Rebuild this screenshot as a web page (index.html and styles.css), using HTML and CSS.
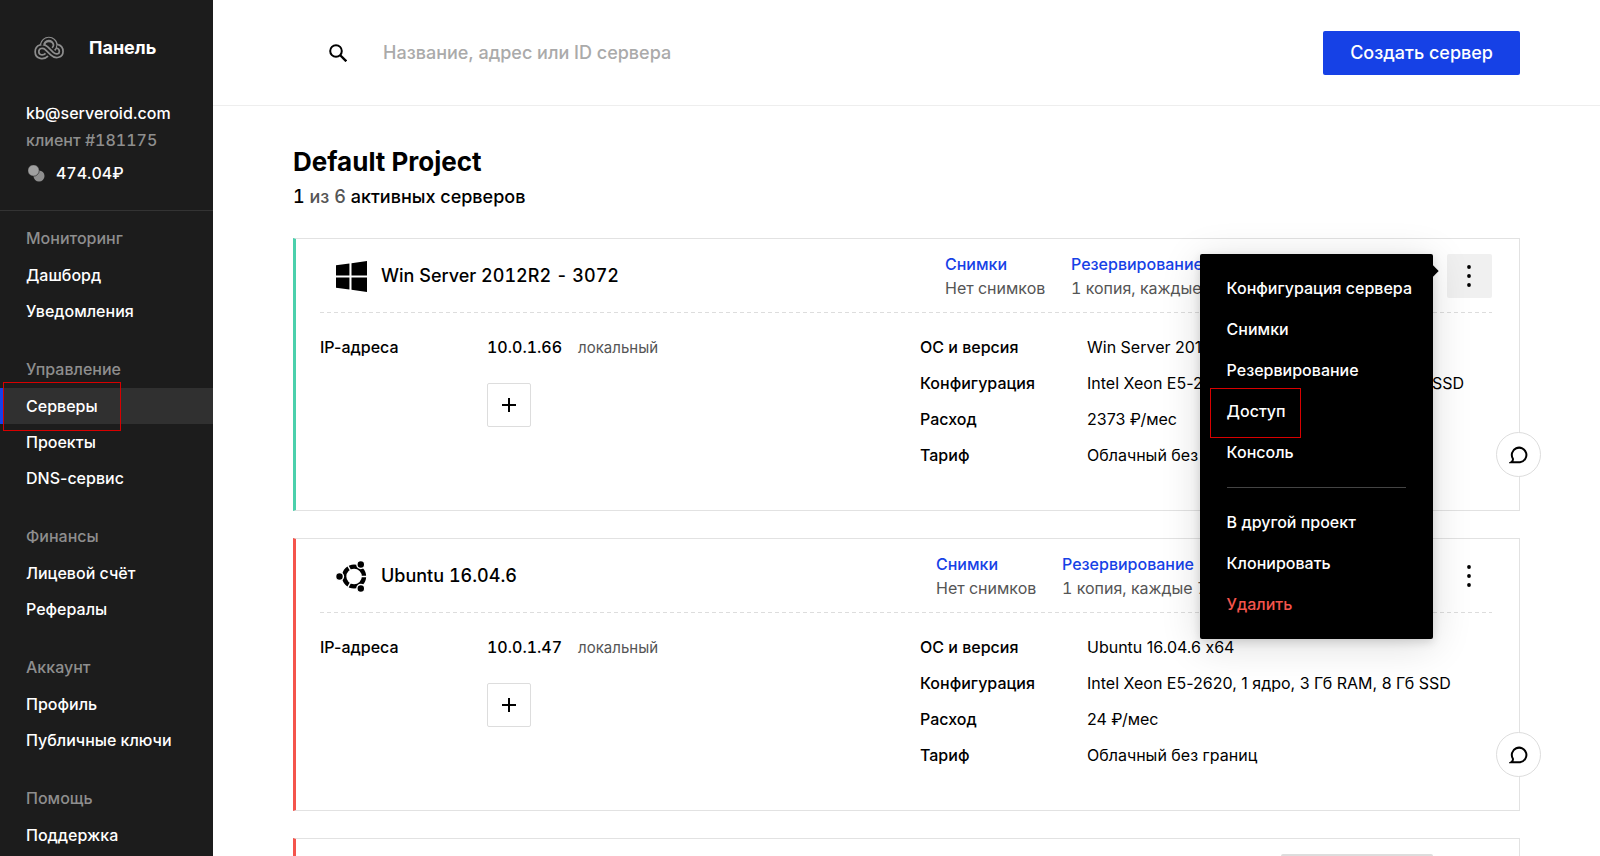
FILE: index.html
```html
<!DOCTYPE html>
<html lang="ru">
<head>
<meta charset="utf-8">
<title>Панель</title>
<link rel="stylesheet" href="styles.css">
</head>
<body>
<svg class="defs" width="0" height="0" aria-hidden="true">
  <symbol id="dots" viewBox="0 0 44 44"><circle cx="22" cy="13" r="1.900"/><circle cx="22" cy="22" r="1.900"/><circle cx="22" cy="31" r="1.900"/></symbol>
  <symbol id="plus" viewBox="0 0 14 14"><path d="M7 0v14M0 7h14" fill="none" stroke="#000" stroke-width="2"/></symbol>
  <symbol id="chat" viewBox="0 0 20 18"><path d="M2.200 16.200c1.300-.9 2-2 1.700-3.400A7.300 7.300 0 1 1 11 16.200z" fill="none" stroke="#000" stroke-width="2"/></symbol>
</svg>
<div class="app">
  <aside class="sidebar">
    <a class="brand" href="#">
      <svg class="logo" viewBox="0 0 30 24" fill="none" aria-hidden="true">
        <g stroke="#8e8e8e" stroke-width="5.400"><path d="M8.400 9A6.600 6.600 0 0 1 21.400 9c0 1.800-.8 3-2 4.200"/><path d="M12.800 18.800C9.500 22 3 21.300 3 15.700 3 10.500 9 9 12.500 12.200l5.500 5.400c4 3.800 9.200 2 9.200-2.200 0-2.600-1.500-4.400-3.600-5"/></g>
        <g stroke="#1c1c1c" stroke-width="2"><path d="M8.200 9.600A6.600 6.600 0 0 1 21.400 9c0 1.800-.8 3-2.400 4.600"/><path d="M13.200 18.400C9.500 22 3 21.300 3 15.700 3 10.500 9 9 12.500 12.200l5.500 5.400c4 3.800 9.200 2 9.200-2.200 0-2.600-1.500-4.400-4-5.200"/></g>
      </svg>
      <span>Панель</span>
    </a>
    <div class="account">
      <div class="email">kb@serveroid.com</div>
      <div class="client">клиент #181175</div>
      <div class="balance">
        <svg class="coins" viewBox="0 0 17 17" aria-hidden="true"><circle cx="11" cy="11" r="5.500" fill="#8e8e8e"/><circle cx="5.500" cy="5.500" r="5.700" fill="#a0a0a0" stroke="#1c1c1c" stroke-width=".6"/></svg>
        <span>474.04₽</span>
      </div>
    </div>
    <nav class="nav">
      <section class="group"><h2>Мониторинг</h2><a href="#">Дашборд</a><a href="#">Уведомления</a></section>
      <section class="group"><h2>Управление</h2><a class="active" href="#">Серверы<i class="mark"></i></a><a href="#">Проекты</a><a href="#">DNS-сервис</a></section>
      <section class="group"><h2>Финансы</h2><a href="#">Лицевой счёт</a><a href="#">Рефералы</a></section>
      <section class="group"><h2>Аккаунт</h2><a href="#">Профиль</a><a href="#">Публичные ключи</a></section>
      <section class="group"><h2>Помощь</h2><a href="#">Поддержка</a></section>
    </nav>
  </aside>
  <div class="page">
    <header class="topbar">
      <label class="search">
        <svg viewBox="0 0 18 18" fill="none" stroke="#000" stroke-width="2" aria-hidden="true"><circle cx="7" cy="7" r="5.800"/><path d="M11 11l6.300 6.300" stroke-width="2.400"/></svg>
        <input type="text" placeholder="Название, адрес или ID сервера" aria-label="Поиск сервера">
      </label>
      <button class="create" type="button">Создать сервер</button>
    </header>
    <main class="content">
      <h1>Default Project</h1>
      <p class="summary">1 <span>из 6</span> активных серверов</p>

      <article class="card running">
        <div class="card-head">
          <svg class="os" viewBox="0 0 30 30" aria-hidden="true"><path d="M0 4.200L13 2.500V14H0zM15 2.200L30 0v14H15zM0 16h13v11.500L0 25.800zM15 16h15v14l-15-2.200z"/></svg>
          <h3>Win Server 2012R2 - 3072</h3>
          <div class="stat"><a href="#">Снимки</a><span>Нет снимков</span></div>
          <div class="stat backup wide"><a href="#">Резервирование</a><span>1 копия, каждые</span></div>
          <button class="more open" type="button" aria-label="Действия"><svg><use href="#dots"/></svg></button>
        </div>
        <div class="card-body">
          <div class="ips">
            <div class="label">IP-адреса</div>
            <div><div class="ip"><b>10.0.1.66</b><span>локальный</span></div><button class="add" type="button" aria-label="Добавить IP"><svg><use href="#plus"/></svg></button></div>
          </div>
          <dl class="specs">
            <dt>ОС и версия</dt><dd>Win Server 2012</dd>
            <dt>Конфигурация</dt><dd>Intel Xeon E5-2620, 2 ядра, 3 Гб RAM, 40 Гб SSD</dd>
            <dt>Расход</dt><dd>2373 ₽/мес</dd>
            <dt>Тариф</dt><dd>Облачный без</dd>
          </dl>
        </div>
        <button class="chat" type="button" aria-label="Комментарий"><svg><use href="#chat"/></svg></button>
        <div class="menu">
          <a href="#">Конфигурация сервера</a>
          <a href="#">Снимки</a>
          <a href="#">Резервирование</a>
          <a href="#">Доступ<i class="mark"></i></a>
          <a href="#">Консоль</a>
          <hr>
          <a href="#">В другой проект</a>
          <a href="#">Клонировать</a>
          <a class="danger" href="#">Удалить</a>
        </div>
      </article>

      <article class="card stopped">
        <div class="card-head">
          <svg class="os" viewBox="0 0 30 30" aria-hidden="true"><circle cx="17.500" cy="15" r="9.600" fill="none" stroke="#000" stroke-width="4.200"/><path d="M17.500 15H30M17.500 15L11 3.700M17.500 15L11 26.300" stroke="#fff" stroke-width="1.400"/><g stroke="#fff" stroke-width="1.400"><circle cx="3.400" cy="15" r="3.800"/><circle cx="24" cy="3.400" r="3.800"/><circle cx="24" cy="26.600" r="3.800"/></g></svg>
          <h3>Ubuntu 16.04.6</h3>
          <div class="stat"><a href="#">Снимки</a><span>Нет снимков</span></div>
          <div class="stat backup wider"><a href="#">Резервирование</a><span>1 копия, каждые 7</span></div>
          <button class="more" type="button" aria-label="Действия"><svg><use href="#dots"/></svg></button>
        </div>
        <div class="card-body">
          <div class="ips">
            <div class="label">IP-адреса</div>
            <div><div class="ip"><b>10.0.1.47</b><span>локальный</span></div><button class="add" type="button" aria-label="Добавить IP"><svg><use href="#plus"/></svg></button></div>
          </div>
          <dl class="specs">
            <dt>ОС и версия</dt><dd>Ubuntu 16.04.6 x64</dd>
            <dt>Конфигурация</dt><dd>Intel Xeon E5-2620, 1 ядро, 3 Гб RAM, 8 Гб SSD</dd>
            <dt>Расход</dt><dd>24 ₽/мес</dd>
            <dt>Тариф</dt><dd>Облачный без границ</dd>
          </dl>
        </div>
        <button class="chat" type="button" aria-label="Комментарий"><svg><use href="#chat"/></svg></button>
      </article>

      <article class="card stopped">
        <div class="card-head"><div class="placeholder"></div></div>
      </article>
    </main>
  </div>
</div>
</body>
</html>
```
FILE: styles.css
```css
* { box-sizing: border-box; }
body {
  margin: 0;
  background: #fff;
  color: #000;
  font: 500 16px/24px Inter, "Liberation Sans", sans-serif;
  font-variant-ligatures: no-contextual;
}
a { color: inherit; text-decoration: none; }
h1, h2, h3, p, dl, dd { margin: 0; }
button { padding: 0; border: 0; font: inherit; cursor: pointer; }
svg { display: block; }
.defs { position: absolute; }
.app { display: flex; height: 100vh; overflow: hidden; }
.client, .balance, .summary, .card-head, .ip { font-variant-numeric: tabular-nums; }

/* Sidebar */
.sidebar { flex: 0 0 213px; overflow: hidden; background: #1c1c1c; color: #fff; }
.brand {
  display: flex; align-items: center; gap: 25px;
  padding: 36px 0 0 34px;
  font-size: 18px; font-weight: 700;
}
.logo { width: 30px; height: 24px; }
.account { padding: 41px 26px 17px; border-bottom: 1px solid #333; }
.account > div { height: 26px; }
.account .client { color: #8e8e8e; line-height: 26px; }
.account .balance { display: flex; align-items: center; gap: 11px; height: 40px; padding-left: 2px; }
.coins { width: 17px; height: 17px; }
.nav { display: flex; flex-direction: column; gap: 21px; padding-top: 8px; }
.group { display: flex; flex-direction: column; }
.group h2 { padding-left: 26px; color: #8e8e8e; font-size: 16px; font-weight: 500; line-height: 38px; }
.group a { position: relative; padding-left: 26px; line-height: 36px; }
.group .active { background: #303030; box-shadow: inset 3px 0 #1641e6; }
.mark { position: absolute; border: 1px solid #d80000; }
.active .mark { left: 3px; top: -6px; width: 118px; height: 49px; }

/* Header */
.page { flex: 1; min-width: 0; }
.topbar {
  display: flex; align-items: center; gap: 40px;
  height: 106px; padding: 0 80px 0 116px;
  border-bottom: 1px solid #eee;
}
.search { flex: 1; display: flex; align-items: center; gap: 36px; }
.search svg { width: 18px; height: 18px; }
.search input { flex: 1; min-width: 0; padding: 0; border: 0; outline: 0; font: 500 18px/24px Inter, sans-serif; }
.search input::placeholder { color: #aaa; opacity: 1; }
.create { height: 44px; padding: 0 27px; border-radius: 2px; background: #1641e6; color: #fff; font-size: 18px; }

/* Project */
.content { padding: 40px 80px 0; }
h1 { font-size: 26px; font-weight: 700; line-height: 32px; }
.summary { padding: 7px 0 29px; font-size: 18px; }
.summary span { color: #555; }

/* Server card */
.card {
  position: relative;
  min-height: 273px; margin-bottom: 27px; padding: 0 27px 0 24px;
  border: 1px solid #e2e2e2; border-left: 3px solid;
}
.running { border-left-color: #4bd0ac; }
.stopped { border-left-color: #f4544c; }
.card-head {
  display: flex; align-items: center;
  height: 74px; padding-left: 16px;
  background: repeating-linear-gradient(90deg, #ddd 0 4px, transparent 4px 7px) bottom / 100% 1px no-repeat;
}
.os { width: 31px; height: 31px; margin-right: 14px; }
h3 { flex: 1; font-size: 18px; font-weight: 500; }
.stat { display: flex; flex-direction: column; width: 126px; white-space: nowrap; }
.stat a { color: #1641e6; }
.stat span { color: #555; font-weight: 400; }
.backup.wide { width: 376px; }
.backup.wider { width: 385px; }
.more { width: 45px; height: 44px; border-radius: 2px; background: none; }
.more.open { background: #f0f0f0; }
.more svg { width: 44px; height: 44px; }
.card-body { display: grid; grid-template-columns: 1fr 1fr; gap: 28px; padding-top: 16px; }
.ips, .specs { display: grid; grid-template-columns: 167px 1fr; align-content: start; line-height: 36px; }
.ip { display: flex; align-items: baseline; gap: 16px; }
.ip b { font-weight: 500; }
.ip span { color: #555; font-weight: 400; font-size: 15px; }
.add { display: grid; place-items: center; width: 44px; height: 44px; margin-top: 17px; border: 1px solid #ddd; border-radius: 2px; background: #fff; }
.add svg { width: 14px; height: 14px; }
.specs dd { font-weight: 400; white-space: nowrap; }
.chat {
  position: absolute; right: -22px; bottom: 33px;
  display: grid; place-items: center;
  width: 45px; height: 45px; border: 1px solid #ddd; border-radius: 50%; background: #fff;
}
.chat svg { width: 20px; height: 18px; }
.placeholder { align-self: flex-start; width: 152px; height: 44px; margin: 15px 59px 0 auto; border-radius: 2px; background: #ddd; }

/* Action menu */
.menu {
  position: absolute; z-index: 2; top: 15px; right: 86px;
  display: flex; flex-direction: column;
  padding: 14px 21px 14px 27px; border-radius: 2px;
  background: #000; color: #fff;
  box-shadow: 0 6px 40px rgba(0, 0, 0, .14), 0 3px 10px rgba(0, 0, 0, .14);
}
.menu::after {
  content: ""; position: absolute; top: 13px; right: -4px;
  width: 8px; height: 8px; background: #000; transform: rotate(45deg);
}
.menu a { position: relative; line-height: 41px; white-space: nowrap; }
.menu hr { height: 1px; margin: 14px 6px 14px 0; border: 0; background: #444; }
.menu .danger { color: #f4544c; }
.menu .mark { left: -17px; top: -3px; width: 91px; height: 50px; }
```
